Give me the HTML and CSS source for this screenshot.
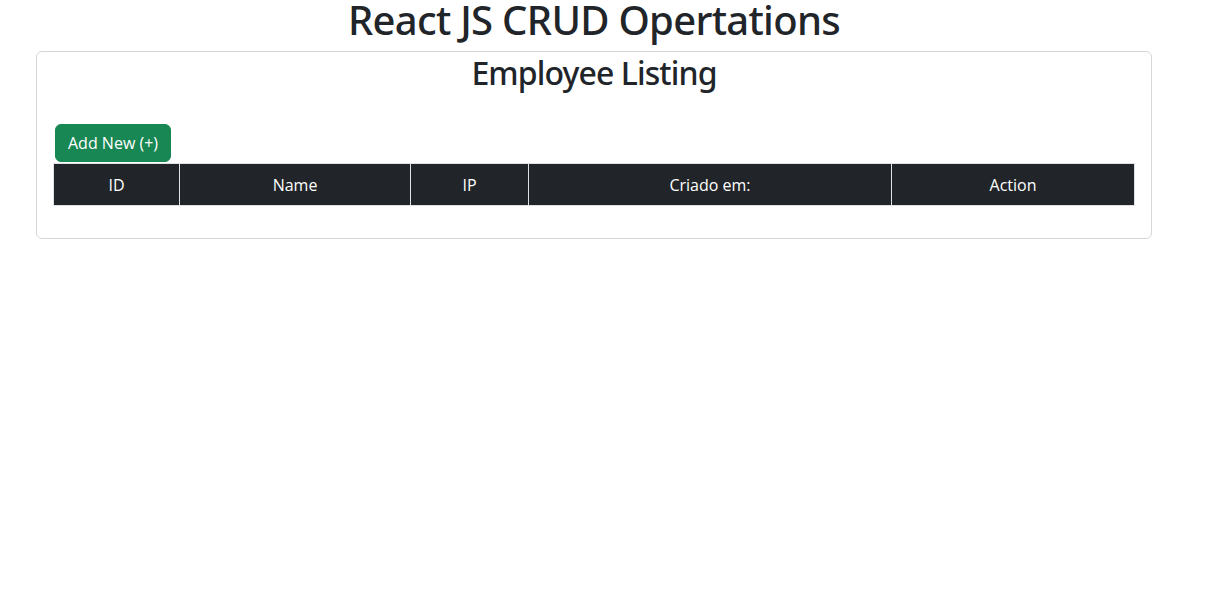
FILE: index.html
```html
<!DOCTYPE html>
<html lang="en">
<head>
<meta charset="utf-8">
<title>React JS CRUD Opertations</title>
<link rel="stylesheet" href="styles.css">
</head>
<body>
<div class="app">
  <h1 class="page-title">React JS CRUD Opertations</h1>
  <div class="card">
    <h2 class="card-title">Employee Listing</h2>
    <div class="actions">
      <button class="btn-add" type="button">Add New (+)</button>
    </div>
    <table class="listing">
      <thead>
        <tr>
          <th class="col-id">ID</th>
          <th class="col-name">Name</th>
          <th class="col-ip">IP</th>
          <th class="col-created">Criado em:</th>
          <th class="col-action">Action</th>
        </tr>
      </thead>
    </table>
  </div>
</div>
</body>
</html>
```

FILE: styles.css
```css
* { box-sizing: border-box; }

body {
  margin: 0;
  background: #fff;
  color: #212529;
  font-family: "Open Sans", "Noto Sans", sans-serif;
  font-size: 16px;
  line-height: 1.5;
}

.app {
  width: 1116px;
  margin-left: 36px;
}

.page-title {
  margin: 0 0 13px;
  padding-top: 2px;
  font-family: "Noto Sans", "Open Sans", sans-serif;
  font-size: 40px;
  font-weight: 500;
  line-height: 36px;
  letter-spacing: -0.7px;
  text-align: center;
}

.card {
  border: 1px solid #d6d6d6;
  border-radius: 6px;
  padding: 0 16px 16px 16px;
}

.card-title {
  margin: 0;
  padding-top: 2px;
  font-family: "Noto Sans", "Open Sans", sans-serif;
  font-size: 32px;
  font-weight: 500;
  line-height: 38px;
  letter-spacing: -0.9px;
  text-align: center;
}

.actions {
  display: flex;
  margin-top: 32px;
  padding-left: 2px;
}

.btn-add {
  height: 38px;
  padding: 6px 12px;
  border: 1px solid #198754;
  border-radius: 6px;
  background: #198754;
  color: #fff;
  font-family: inherit;
  font-size: 16px;
  line-height: 24px;
}

.listing {
  width: 100%;
  margin: 1px 0 16px;
  border-collapse: collapse;
  table-layout: fixed;
}

.listing th {
  height: 42px;
  padding: 8px;
  border: 1px solid #dee2e6;
  background: #212529;
  color: #fff;
  font-weight: 400;
  text-align: center;
  line-height: 24px;
}

.col-id { width: 126px; }
.col-name { width: 231px; }
.col-ip { width: 118px; }
.col-created { width: 363px; }
```
